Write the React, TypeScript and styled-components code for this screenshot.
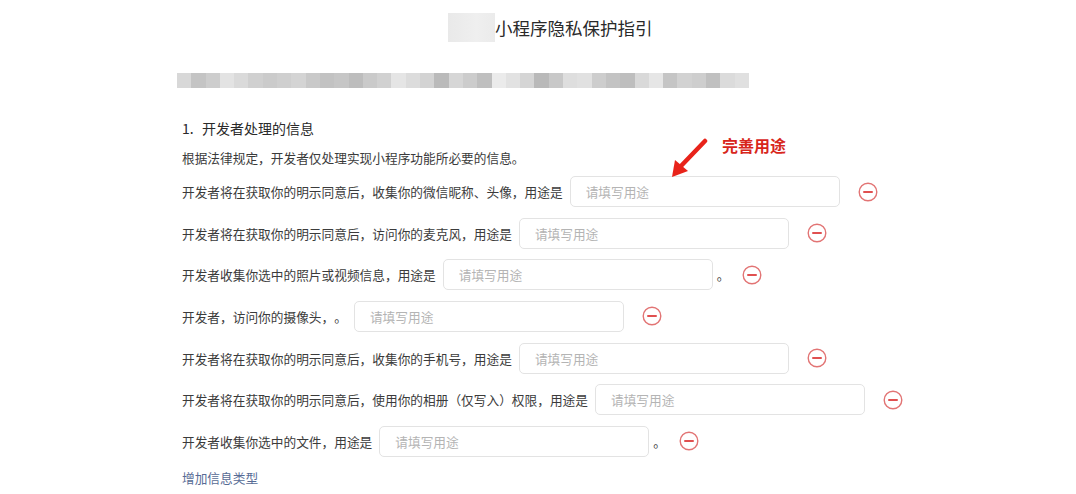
import React from "react";
import styled, { createGlobalStyle } from "styled-components";

const GlobalStyle = createGlobalStyle`
  html, body {
    margin: 0;
    padding: 0;
    background: #ffffff;
  }
  body {
    font-family: "Noto Sans CJK SC", "Noto Sans", sans-serif;
    color: #3b3b3b;
    text-spacing-trim: space-all;
  }
`;

const Page = styled.div`
  position: relative;
  width: 1076px;
  height: 494px;
  padding-left: 182px;
  box-sizing: border-box;
  overflow: hidden;
`;

const TitleRow = styled.div`
  display: flex;
  align-items: center;
  height: 29px;
  margin-top: 13px;
  margin-left: 266px;
`;

const BlurBlock = styled.div`
  width: 47px;
  height: 29px;
  background: linear-gradient(90deg, #e9e9e9, #efefef 60%, #ebebeb);
`;

const Title = styled.h1`
  margin: 0;
  font-size: 17.5px;
  font-weight: 400;
  line-height: 29px;
  color: #2a2a2a;
`;

const Mosaic = styled.div`
  display: flex;
  width: 572px;
  height: 15px;
  margin-top: 31px;
  margin-left: -5px;
`;

const MosaicCell = styled.div<{ $shade: string }>`
  flex: 1;
  background: ${(p) => p.$shade};
`;

const Heading = styled.div`
  margin-top: 30px;
  font-size: 14px;
  line-height: 20px;
  color: #2a2a2a;
`;

const Num = styled.span`
  display: inline-block;
  width: 20px;
`;

const Intro = styled.p`
  margin: 10px 0 0;
  font-size: 12.7px;
  line-height: 20px;
`;

const Rows = styled.div`
  display: flex;
  flex-direction: column;
  gap: 10.67px;
  margin-top: 8px;
`;

const Row = styled.div`
  display: flex;
  align-items: center;
  height: 31px;
`;

const Label = styled.span`
  font-size: 12.7px;
  white-space: nowrap;
`;

const Input = styled.input`
  width: 270px;
  height: 31px;
  box-sizing: border-box;
  margin-left: 7px;
  padding: 0 15px;
  border: 1px solid #e3e3e3;
  border-radius: 5px;
  font-family: inherit;
  font-size: 12.7px;
  color: #353535;
  outline: none;
  &::placeholder {
    color: #b4b4b4;
  }
`;

const Period = styled.span`
  margin-left: 4px;
  font-size: 12.7px;
`;

const RemoveButton = styled.button<{ $after: boolean }>`
  display: flex;
  padding: 0;
  margin-left: ${(p) => (p.$after ? "13px" : "18px")};
  border: none;
  background: none;
  cursor: pointer;
`;

const AddLink = styled.a`
  display: block;
  margin-top: 11px;
  font-size: 12.7px;
  line-height: 20px;
  color: #576b95;
  text-decoration: none;
  cursor: pointer;
`;

const Annotation = styled.div`
  position: absolute;
  left: 668px;
  top: 134px;
  display: flex;
  align-items: flex-start;
`;

const Note = styled.span`
  margin-left: 14px;
  margin-top: 1px;
  font-size: 16px;
  font-weight: 700;
  line-height: 20px;
  color: #d8261c;
`;

const shades = [
  "#d8d8d8", "#c4c4c4", "#cdcdcd", "#e3e3e3", "#dadada", "#d0d0d0",
  "#cbcbcb", "#cfcfcf", "#d4d4d4", "#c9c9c9", "#c2c2c2", "#c6c6c6",
  "#bdbdbd", "#cacaca", "#d1d1d1", "#e5e5e5", "#dcdcdc", "#d3d3d3",
  "#bababa", "#d6d6d6", "#cccccc", "#bfbfbf", "#ebebeb", "#e2e2e2",
  "#d5d5d5", "#b9b9b9", "#c8c8c8", "#dedede", "#e1e1e1", "#cdcdcd",
  "#c3c3c3", "#bebebe", "#d9d9d9", "#e6e6e6", "#c5c5c5", "#d2d2d2",
  "#cecece", "#c0c0c0", "#dbdbdb", "#e0e0e0",
];

const items = [
  { text: "开发者将在获取你的明示同意后，收集你的微信昵称、头像，用途是", period: false },
  { text: "开发者将在获取你的明示同意后，访问你的麦克风，用途是", period: false },
  { text: "开发者收集你选中的照片或视频信息，用途是", period: true },
  { text: "开发者，访问你的摄像头，。", period: false },
  { text: "开发者将在获取你的明示同意后，收集你的手机号，用途是", period: false },
  { text: "开发者将在获取你的明示同意后，使用你的相册（仅写入）权限，用途是", period: false },
  { text: "开发者收集你选中的文件，用途是", period: true },
];

const MinusIcon: React.FC = () => (
  <svg width="20" height="20" viewBox="0 0 20 20">
    <circle cx="10" cy="10" r="8.8" fill="none" stroke="#e27474" strokeWidth="1.4" />
    <line x1="6" y1="10" x2="14" y2="10" stroke="#e05050" strokeWidth="2" strokeLinecap="round" />
  </svg>
);

const Arrow: React.FC = () => (
  <svg width="40" height="46" viewBox="0 0 40 46">
    <line x1="37" y1="7" x2="13" y2="32" stroke="#e8231a" strokeWidth="4.5" strokeLinecap="round" />
    <polygon points="4,43 7,26 20,37" fill="#e8231a" />
  </svg>
);

const App: React.FC = () => {
  return (
    <Page>
      <GlobalStyle />
      <TitleRow>
        <BlurBlock />
        <Title>小程序隐私保护指引</Title>
      </TitleRow>
      <Mosaic>
        {shades.map((s, i) => (
          <MosaicCell key={i} $shade={s} />
        ))}
      </Mosaic>
      <Heading>
        <Num>1.</Num>开发者处理的信息
      </Heading>
      <Intro>根据法律规定，开发者仅处理实现小程序功能所必要的信息。</Intro>
      <Rows>
        {items.map((item, i) => (
          <Row key={i}>
            <Label>{item.text}</Label>
            <Input placeholder="请填写用途" />
            {item.period && <Period>。</Period>}
            <RemoveButton $after={item.period}>
              <MinusIcon />
            </RemoveButton>
          </Row>
        ))}
      </Rows>
      <AddLink>增加信息类型</AddLink>
      <Annotation>
        <Arrow />
        <Note>完善用途</Note>
      </Annotation>
    </Page>
  );
};

export default App;
